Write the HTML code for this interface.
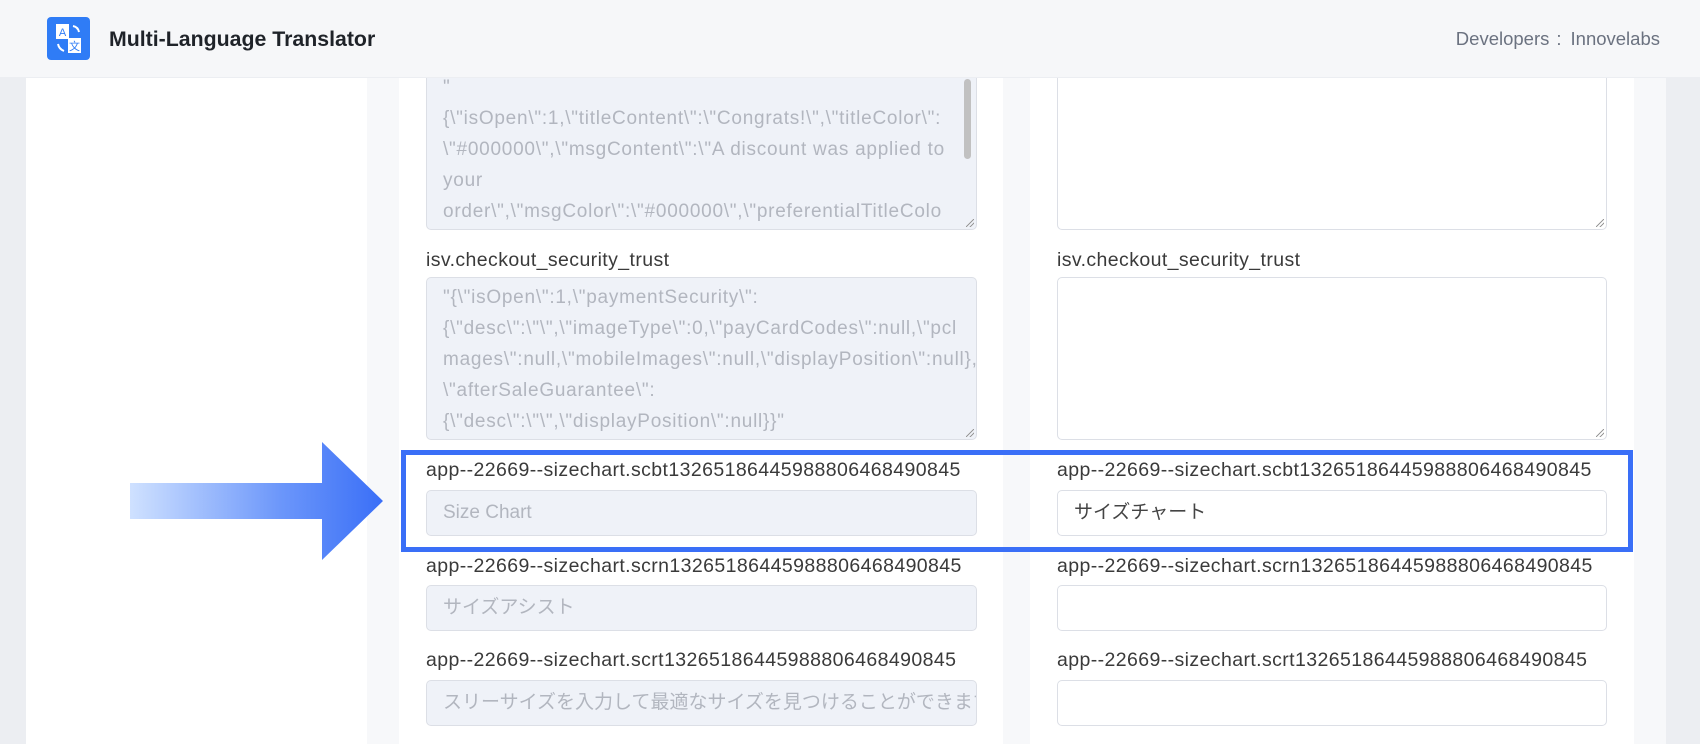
<!DOCTYPE html>
<html><head><meta charset="utf-8"><style>
*{box-sizing:border-box;margin:0;padding:0}
body{width:1700px;height:744px;overflow:hidden;background:#f7f8fa;font-family:"Liberation Sans","Noto Sans CJK JP",sans-serif;position:relative}
.a{position:absolute}
.hdr{left:0;top:0;width:1700px;height:78px;background:#f6f7f9;z-index:5;border-bottom:1px solid #eceef2}
.ta{position:absolute;border:1px solid #dcdfe6;border-radius:5px;overflow:hidden;font-size:19px;letter-spacing:0.75px;line-height:31px;white-space:nowrap}
.dis{background:#eff2f8;color:#b2b6bf}
.en{background:#fff}
.lbl{position:absolute;font-size:19.5px;letter-spacing:0.4px;color:#3a3a3a;white-space:nowrap;line-height:24px}
.inp{position:absolute;border:1px solid #dcdfe6;border-radius:5px;height:46px;font-size:19px;line-height:44px;padding-left:16px;white-space:nowrap;overflow:hidden}
.grip{position:absolute;right:2px;bottom:2px;width:8px;height:8px;background:linear-gradient(135deg,transparent 45%,#999 46%,#999 54%,transparent 55%,transparent 70%,#999 71%,#999 79%,transparent 80%)}
</style></head><body>
<div class="a" style="left:0;top:0;width:26px;height:744px;background:#eceef2"></div>
<div class="a" style="left:26px;top:0;width:341px;height:744px;background:#fff"></div>
<div class="a" style="left:399px;top:0;width:604px;height:744px;background:#fff"></div>
<div class="a" style="left:1030px;top:0;width:604px;height:744px;background:#fff"></div>
<div class="a" style="left:1666px;top:0;width:34px;height:744px;background:#eceef2"></div>

<div class="a hdr">
  <div class="a" style="left:47px;top:17px;width:43px;height:43px;background:#2f7cf6;border-radius:4px">
    <svg width="43" height="43" viewBox="0 0 43 43">
      <rect x="9" y="7" width="13" height="15" fill="#fff"/>
      <text x="15.5" y="19" font-size="11" fill="#2f7cf6" text-anchor="middle" font-family="Liberation Sans">A</text>
      <rect x="21" y="21" width="13" height="15" fill="#fff"/>
      <text x="27.5" y="33" font-size="11" fill="#2f7cf6" text-anchor="middle" font-family="Noto Sans CJK SC">文</text>
      <path d="M26 9 Q31 10 32 15" stroke="#fff" stroke-width="2" fill="none"/>
      <path d="M11 27 Q12 32 17 34" stroke="#fff" stroke-width="2" fill="none"/>
    </svg>
  </div>
  <div class="a" style="left:109px;top:26px;font-size:21.3px;line-height:26px;font-weight:bold;color:#1f2329">Multi-Language Translator</div>
  <div class="a" style="right:40px;top:27px;font-size:18.5px;line-height:24px;height:24px;color:#6b7280;white-space:nowrap">Developers<span style="font-family:'Liberation Sans',sans-serif;padding:0 9px 0 7px">:</span>Innovelabs</div>
</div>

<!-- left column -->
<div class="ta dis" style="left:426px;top:40px;width:551px;height:190px;padding:31px 0 0 16px">"<br>{\"isOpen\":1,\"titleContent\":\"Congrats!\",\"titleColor\":<br>\"#000000\",\"msgContent\":\"A discount was applied to<br>your<br>order\",\"msgColor\":\"#000000\",\"preferentialTitleColo<br>or\":\"#000000\",\"msgBgColor\":\"#FFFFFF\",\"btnColor\"
  <div class="a" style="right:5px;top:38px;width:7px;height:80px;background:#c1c1c1;border-radius:4px"></div>
  <div class="grip"></div></div>
<div class="lbl" style="left:426px;top:248px">isv.checkout_security_trust</div>
<div class="ta dis" style="left:426px;top:277px;width:551px;height:163px;padding:4px 0 0 16px">"{\"isOpen\":1,\"paymentSecurity\":<br>{\"desc\":\"\",\"imageType\":0,\"payCardCodes\":null,\"pcl<br>mages\":null,\"mobileImages\":null,\"displayPosition\":null},<br>\"afterSaleGuarantee\":<br>{\"desc\":\"\",\"displayPosition\":null}}"<div class="grip"></div></div>

<div class="lbl" style="left:426px;top:458px">app--22669--sizechart.scbt13265186445988806468490845</div>
<div class="inp dis" style="left:426px;top:490px;width:551px">Size Chart</div>
<div class="lbl" style="left:426px;top:554px">app--22669--sizechart.scrn13265186445988806468490845</div>
<div class="inp dis" style="left:426px;top:585px;width:551px">サイズアシスト</div>
<div class="lbl" style="left:426px;top:648px">app--22669--sizechart.scrt13265186445988806468490845</div>
<div class="inp dis" style="left:426px;top:680px;width:551px">スリーサイズを入力して最適なサイズを見つけることができます</div>

<!-- right column -->
<div class="ta en" style="left:1057px;top:40px;width:550px;height:190px"><div class="grip"></div></div>
<div class="lbl" style="left:1057px;top:248px">isv.checkout_security_trust</div>
<div class="ta en" style="left:1057px;top:277px;width:550px;height:163px"><div class="grip"></div></div>
<div class="lbl" style="left:1057px;top:458px">app--22669--sizechart.scbt13265186445988806468490845</div>
<div class="inp en" style="left:1057px;top:490px;width:550px;color:#444">サイズチャート</div>
<div class="lbl" style="left:1057px;top:554px">app--22669--sizechart.scrn13265186445988806468490845</div>
<div class="inp en" style="left:1057px;top:585px;width:550px"></div>
<div class="lbl" style="left:1057px;top:648px">app--22669--sizechart.scrt13265186445988806468490845</div>
<div class="inp en" style="left:1057px;top:680px;width:550px"></div>

<!-- highlight box -->
<div class="a" style="left:401px;top:450px;width:1232px;height:102px;border:5px solid #3a6ff7"></div>

<!-- arrow -->
<svg class="a" style="left:125px;top:438px" width="265" height="125" viewBox="0 0 265 125">
  <defs><linearGradient id="g" x1="0" x2="1" y1="0" y2="0"><stop offset="0" stop-color="#cfe1ff"/><stop offset="0.6" stop-color="#6b96fa"/><stop offset="1" stop-color="#3a6ff7"/></linearGradient></defs>
  <path d="M5 45 H197 V4 L258 63 L197 122 V81 H5 Z" fill="url(#g)"/>
</svg>
</body></html>
